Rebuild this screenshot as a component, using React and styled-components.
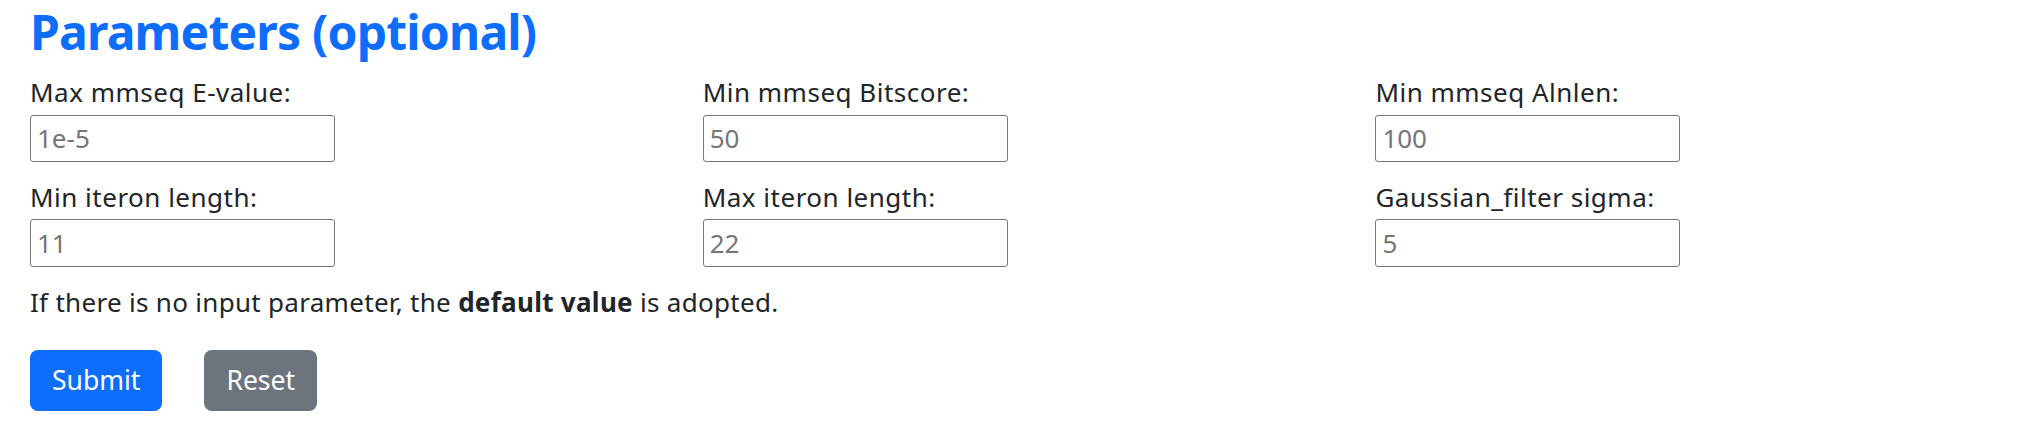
import React from "react";
import styled, { createGlobalStyle } from "styled-components";

const GlobalStyle = createGlobalStyle`
  html, body {
    margin: 0;
    padding: 0;
    background: #fff;
  }
  body {
    font-family: "Noto Sans", "Open Sans", sans-serif;
    color: #212529;
  }
`;

const Page = styled.div`
  padding: 2px 30px 0 30px;
`;

const Title = styled.h2`
  margin: 0 0 12px 0;
  font-size: 48px;
  line-height: 60px;
  font-weight: 700;
  letter-spacing: -0.8px;
  color: #0d6efd;
`;

const Grid = styled.div`
  display: grid;
  grid-template-columns: repeat(3, 672.7px);
  row-gap: 17px;
`;

const Field = styled.div`
  display: flex;
  flex-direction: column;
  align-items: flex-start;
`;

const Label = styled.label`
  font-size: 26px;
  line-height: 37.5px;
  letter-spacing: 0.5px;
  margin-bottom: 3px;
`;

const Input = styled.input`
  box-sizing: border-box;
  width: 305px;
  height: 47.4px;
  padding: 0 6px;
  border: 1px solid #767676;
  border-radius: 3px;
  font-family: inherit;
  font-size: 26px;
  color: #212529;
  background: #fff;
  outline: none;

  &::placeholder {
    color: #757575;
  }
`;

const Note = styled.p`
  margin: 17.5px 0 28px 0;
  font-size: 26px;
  line-height: 37.5px;
  letter-spacing: 0.3px;

  b {
    font-weight: 700;
  }
`;

const Actions = styled.div`
  display: flex;
  gap: 42px;
`;

const Button = styled.button`
  height: 61px;
  padding: 0 22px;
  border: none;
  border-radius: 8px;
  font-family: inherit;
  font-size: 26.5px;
  color: #fff;
  background: ${(p) => (p.$variant === "secondary" ? "#6c757d" : "#0d6efd")};
  cursor: pointer;
`;

const fields = [
  { label: "Max mmseq E-value:", placeholder: "1e-5" },
  { label: "Min mmseq Bitscore:", placeholder: "50" },
  { label: "Min mmseq Alnlen:", placeholder: "100" },
  { label: "Min iteron length:", placeholder: "11" },
  { label: "Max iteron length:", placeholder: "22" },
  { label: "Gaussian_filter sigma:", placeholder: "5" },
];

export default function App() {
  return (
    <Page>
      <GlobalStyle />
      <Title>Parameters (optional)</Title>
      <Grid>
        {fields.map((f) => (
          <Field key={f.label}>
            <Label>{f.label}</Label>
            <Input type="text" placeholder={f.placeholder} />
          </Field>
        ))}
      </Grid>
      <Note>
        If there is no input parameter, the <b>default value</b> is adopted.
      </Note>
      <Actions>
        <Button type="submit">Submit</Button>
        <Button type="reset" $variant="secondary">
          Reset
        </Button>
      </Actions>
    </Page>
  );
}
